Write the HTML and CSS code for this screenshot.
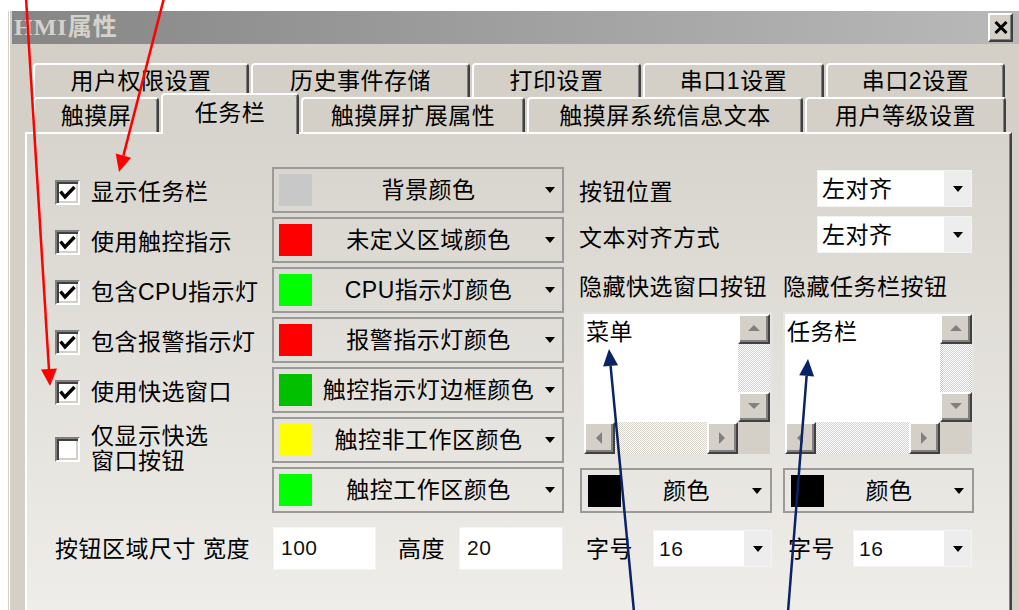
FILE: index.html
```html
<!DOCTYPE html>
<html lang="zh-CN">
<head>
<meta charset="utf-8">
<title>HMI属性</title>
<link rel="stylesheet" href="styles.css">
</head>
<body>
<div class="window">
  <div class="titlebar">
    <span class="title">HMI属性</span>
    <div class="close"><svg width="14" height="13" viewBox="0 0 14 13"><path d="M1.5 1 L12.5 12 M12.5 1 L1.5 12" stroke="#000" stroke-width="3" fill="none"/></svg></div>
  </div>
  <div class="tabstrip">
    <div class="tabrow back">
      <div class="tab w216">用户权限设置</div>
      <div class="tab w219">历史事件存储</div>
      <div class="tab w169">打印设置</div>
      <div class="tab w181">串口1设置</div>
      <div class="tab w179">串口2设置</div>
    </div>
    <div class="tabrow front">
      <div class="tab w126">触摸屏</div>
      <div class="tab w138 sel">任务栏</div>
      <div class="tab w224">触摸屏扩展属性</div>
      <div class="tab w276">触摸屏系统信息文本</div>
      <div class="tab w201">用户等级设置</div>
    </div>
  </div>
  <div class="panel">
    <div class="top-area">
      <div class="checks">
        <div class="check"><span class="box"><svg width="19" height="19" viewBox="0 0 19 19"><polyline points="2.5,8.5 7,14 16.5,4" fill="none" stroke="#000" stroke-width="3.4"/></svg></span><span class="ltext">显示任务栏</span></div>
        <div class="check"><span class="box"><svg width="19" height="19" viewBox="0 0 19 19"><polyline points="2.5,8.5 7,14 16.5,4" fill="none" stroke="#000" stroke-width="3.4"/></svg></span><span class="ltext">使用触控指示</span></div>
        <div class="check"><span class="box"><svg width="19" height="19" viewBox="0 0 19 19"><polyline points="2.5,8.5 7,14 16.5,4" fill="none" stroke="#000" stroke-width="3.4"/></svg></span><span class="ltext">包含CPU指示灯</span></div>
        <div class="check"><span class="box"><svg width="19" height="19" viewBox="0 0 19 19"><polyline points="2.5,8.5 7,14 16.5,4" fill="none" stroke="#000" stroke-width="3.4"/></svg></span><span class="ltext">包含报警指示灯</span></div>
        <div class="check"><span class="box"><svg width="19" height="19" viewBox="0 0 19 19"><polyline points="2.5,8.5 7,14 16.5,4" fill="none" stroke="#000" stroke-width="3.4"/></svg></span><span class="ltext">使用快选窗口</span></div>
        <div class="check tall"><span class="box"></span><span class="ltext">仅显示快选<br>窗口按钮</span></div>
      </div>
      <div class="colors">
        <div class="cdrop"><span class="sw sw-gray"></span><span class="ctext">背景颜色</span><span class="arrow"></span></div>
        <div class="cdrop"><span class="sw sw-red"></span><span class="ctext">未定义区域颜色</span><span class="arrow"></span></div>
        <div class="cdrop"><span class="sw sw-lime"></span><span class="ctext">CPU指示灯颜色</span><span class="arrow"></span></div>
        <div class="cdrop"><span class="sw sw-red"></span><span class="ctext">报警指示灯颜色</span><span class="arrow"></span></div>
        <div class="cdrop"><span class="sw sw-green"></span><span class="ctext">触控指示灯边框颜色</span><span class="arrow"></span></div>
        <div class="cdrop"><span class="sw sw-yellow"></span><span class="ctext">触控非工作区颜色</span><span class="arrow"></span></div>
        <div class="cdrop"><span class="sw sw-lime"></span><span class="ctext">触控工作区颜色</span><span class="arrow"></span></div>
      </div>
      <div class="right">
        <div class="prop first"><span class="plabel">按钮位置</span><div class="combo w155"><span class="val">左对齐</span><span class="cbtn"><span class="arrow"></span></span></div></div>
        <div class="prop"><span class="plabel">文本对齐方式</span><div class="combo w155"><span class="val">左对齐</span><span class="cbtn"><span class="arrow"></span></span></div></div>
        <div class="pair labels"><span class="colA">隐藏快选窗口按钮</span><span class="colB">隐藏任务栏按钮</span></div>
        <div class="pair lists">
          <div class="listbox lbA">
            <div class="lb-content">菜单</div>
            <div class="vscroll"><span class="sbtn"><span class="tri up"></span></span><span class="track"></span><span class="sbtn"><span class="tri down"></span></span></div>
            <div class="hscroll"><span class="sbtn"><span class="tri left"></span></span><span class="track"></span><span class="sbtn"><span class="tri right"></span></span></div>
            <div class="corner"></div>
          </div>
          <div class="listbox lbB">
            <div class="lb-content">任务栏</div>
            <div class="vscroll"><span class="sbtn"><span class="tri up"></span></span><span class="track"></span><span class="sbtn"><span class="tri down"></span></span></div>
            <div class="hscroll"><span class="sbtn"><span class="tri left"></span></span><span class="track"></span><span class="sbtn"><span class="tri right"></span></span></div>
            <div class="corner"></div>
          </div>
        </div>
        <div class="pair colorsR">
          <div class="cdrop small cdA"><span class="sw sw-black"></span><span class="ctext">颜色</span><span class="arrow"></span></div>
          <div class="cdrop small cdB"><span class="sw sw-black"></span><span class="ctext">颜色</span><span class="arrow"></span></div>
        </div>
      </div>
    </div>
    <div class="bottom-row">
      <span class="blabel bl1">按钮区域尺寸 宽度</span>
      <span class="edit e1">100</span>
      <span class="blabel bl2">高度</span>
      <span class="edit e2">20</span>
      <span class="blabel bl3">字号</span>
      <div class="combo w119"><span class="val num">16</span><span class="cbtn"><span class="arrow"></span></span></div>
      <span class="blabel bl4">字号</span>
      <div class="combo w119"><span class="val num">16</span><span class="cbtn"><span class="arrow"></span></span></div>
    </div>
  </div>
</div>
<svg class="annot" width="1019" height="610" viewBox="0 0 1019 610">
  <g stroke="#ff0000" stroke-width="2.5" fill="none">
    <line x1="26" y1="-2" x2="49" y2="370"/>
    <line x1="164" y1="-2" x2="123.4" y2="155.6"/>
  </g>
  <g fill="#ff0000">
    <polygon points="50,386 41,369.5 57,368.5"/>
    <polygon points="119,172 115.7,153.5 131.1,157.7"/>
  </g>
  <g stroke="#0a2266" stroke-width="2.5" fill="none">
    <line x1="634" y1="612" x2="610.6" y2="366"/>
    <line x1="788" y1="612" x2="806.6" y2="376"/>
  </g>
  <g fill="#0a2266">
    <polygon points="609,349 603.1,366.6 618.1,365.2"/>
    <polygon points="808,359 799.2,375.3 814.1,376.5"/>
  </g>
</svg>
</body>
</html>
```

FILE: styles.css
```css
* { box-sizing: border-box; }
html, body { margin: 0; padding: 0; }
body {
  width: 1019px;
  height: 610px;
  overflow: hidden;
  background: #fff;
  position: relative;
  font-family: "Liberation Sans", "Noto Sans CJK SC", sans-serif;
  font-size: 23px;
  line-height: 26px;
  letter-spacing: 0.5px;
  color: #000;
}

.window {
  margin: 11px 0 0 8px;
  width: 1011px;
  height: 599px;
  padding-left: 4px;
  background: #d4d0c8;
  box-shadow: inset 1px 0 #d4d0c8, inset 2px 0 #fff;
  display: flex;
  flex-direction: column;
}

/* title bar */
.titlebar {
  height: 33px;
  flex: none;
  display: flex;
  justify-content: space-between;
  align-items: flex-start;
  padding: 0 6px 0 2px;
  background: linear-gradient(to right, #868686, #b9b9b9);
}
.title {
  font-family: "Liberation Serif", "Noto Sans CJK SC", serif;
  font-weight: bold;
  font-size: 24px;
  line-height: 33px;
  letter-spacing: 1px;
  color: #d6d2ca;
}
.close {
  margin-top: 2px;
  width: 25px;
  height: 29px;
  background: #d4d0c8;
  border: 2px solid;
  border-color: #fff #404040 #404040 #fff;
  box-shadow: inset -1px -1px #808080;
  display: flex;
  align-items: center;
  justify-content: center;
}

/* tabs */
.tabstrip {
  height: 88px;
  flex: none;
  padding: 19px 0 0 21px;
}
.tabrow { display: flex; gap: 2px; }
.tabrow.back { height: 34px; }
.tabrow.front { height: 35px; align-items: flex-end; }
.tab {
  height: 100%;
  background: #d4d0c8;
  border: 2px solid #fff;
  border-bottom: 0;
  border-right-color: #404040;
  border-radius: 4px 4px 0 0;
  box-shadow: inset -1px 0 #808080;
  display: flex;
  align-items: center;
  justify-content: center;
  white-space: nowrap;
}
.tab.sel {
  height: 41px;
  margin-bottom: -2px;
  padding-bottom: 4px;
  position: relative;
  z-index: 2;
  background: #d7d4cd;
}
.w216 { width: 216px; } .w219 { width: 219px; } .w169 { width: 169px; }
.w181 { width: 181px; } .w179 { width: 179px; } .w126 { width: 126px; }
.w138 { width: 138px; } .w224 { width: 224px; } .w276 { width: 276px; }
.w201 { width: 201px; }

/* page */
.panel {
  flex: 1;
  margin-left: 13px;
  width: 987px;
  border-top: 2px solid #fff;
  border-left: 2px solid #fff;
  border-right: 2px solid #404040;
  box-shadow: inset -1px 0 #808080;
  background: linear-gradient(#d7d4cd, #efede9);
  padding: 33px 0 0 28px;
}
.top-area { display: flex; align-items: flex-start; }

.checks { width: 217px; flex: none; display: flex; flex-direction: column; }
.check { height: 50px; display: flex; align-items: center; }
.check.tall { height: 64px; }
.box {
  width: 25px;
  height: 25px;
  flex: none;
  margin-right: 11px;
  background: #fff;
  border: 2px solid;
  border-color: #808080 #fff #fff #808080;
  box-shadow: inset 2px 2px #404040, inset -2px -2px #d4d0c8;
  display: flex;
  align-items: center;
  justify-content: center;
}
.ltext { white-space: nowrap; line-height: 25px; }

.colors { width: 292px; flex: none; display: flex; flex-direction: column; gap: 4px; }
.cdrop {
  height: 46px;
  border: 2px solid #9a9a9a;
  display: flex;
  align-items: center;
  padding: 0 7px 0 5px;
}
.sw { width: 33px; height: 32px; flex: none; }
.sw-gray { background: #c8c8c8; }
.sw-red { background: #ff0000; }
.sw-lime { background: #00ff00; }
.sw-green { background: #00c000; }
.sw-yellow { background: #ffff00; }
.sw-black { background: #000; }
.ctext { flex: 1; text-align: center; white-space: nowrap; }
.arrow {
  width: 0;
  height: 0;
  flex: none;
  border-left: 5px solid transparent;
  border-right: 5px solid transparent;
  border-top: 6px solid #000;
}

.right { margin-left: 15px; width: 395px; flex: none; display: flex; flex-direction: column; }
.prop { display: flex; align-items: center; height: 37px; margin-top: 9px; }
.prop.first { margin-top: 3px; }
.plabel { width: 238px; flex: none; padding-top: 6px; white-space: nowrap; }
.combo {
  height: 37px;
  background: #fff;
  border: 1px solid #f3f3f3;
  display: flex;
  align-items: center;
  flex: none;
}
.w155 { width: 155px; }
.w119 { width: 119px; }
.combo .val { flex: 1; padding-left: 4px; white-space: nowrap; }
.combo .val.num { padding-left: 5px; font-size: 21px; color: #111; }
.cbtn {
  width: 27px;
  align-self: stretch;
  background: #ededed;
  display: flex;
  align-items: center;
  justify-content: center;
}

.pair { display: flex; gap: 11px; }
.colA { width: 193px; flex: none; white-space: nowrap; }
.colB { width: 191px; flex: none; white-space: nowrap; }
.labels { margin-top: 21px; }
.lists { margin-top: 12px; }
.colorsR { margin-top: 12px; }

.listbox {
  height: 144px;
  background: #fff;
  border: 2px solid #e4e4e2;
  display: grid;
  grid-template-columns: 1fr 32px;
  grid-template-rows: 1fr 32px;
}
.lbA { width: 190px; margin-left: 3px; }
.lbB { width: 191px; }
.lb-content { padding: 5px 0 0 2px; white-space: nowrap; }
.vscroll { display: flex; flex-direction: column; }
.vscroll .sbtn { height: 30px; }
.hscroll { display: flex; }
.hscroll .sbtn { width: 31px; }
.track {
  flex: 1;
  background: repeating-conic-gradient(#d4d0c8 0 25%, #fff 0 50%) 0 0 / 2px 2px;
}
.sbtn {
  flex: none;
  background: #d4d0c8;
  border: 2px solid;
  border-color: #fff #404040 #404040 #fff;
  box-shadow: inset -2px -2px #808080;
  display: flex;
  align-items: center;
  justify-content: center;
}
.corner { background: #d4d0c8; }
.tri { width: 0; height: 0; }
.tri.up { border-left: 6px solid transparent; border-right: 6px solid transparent; border-bottom: 6px solid #808080; margin-top: -2px; }
.tri.down { border-left: 6px solid transparent; border-right: 6px solid transparent; border-top: 6px solid #808080; margin-top: -2px; }
.tri.left { border-top: 6px solid transparent; border-bottom: 6px solid transparent; border-right: 6px solid #808080; margin-left: -2px; }
.tri.right { border-top: 6px solid transparent; border-bottom: 6px solid transparent; border-left: 6px solid #808080; margin-left: -2px; }

.cdrop.small { height: 45px; padding: 0 8px 0 6px; }
.cdA { width: 192px; margin-left: 1px; }
.cdB { width: 191px; }

.bottom-row { margin-top: 14px; height: 43px; display: flex; align-items: center; }
.blabel { flex: none; white-space: nowrap; }
.bl1 { width: 218px; }
.bl2 { margin-left: 22px; width: 61px; }
.bl3 { margin-left: 23px; width: 67px; }
.bl4 { margin-left: 16px; width: 65px; }
.edit {
  height: 43px;
  flex: none;
  background: #fff;
  border: 1px solid #f3f3f3;
  padding-left: 7px;
  font-size: 21px;
  line-height: 39px;
  color: #111;
}
.e1 { width: 103px; }
.e2 { width: 104px; }

.annot {
  position: absolute;
  left: 0;
  top: 0;
  pointer-events: none;
  z-index: 10;
}
```
